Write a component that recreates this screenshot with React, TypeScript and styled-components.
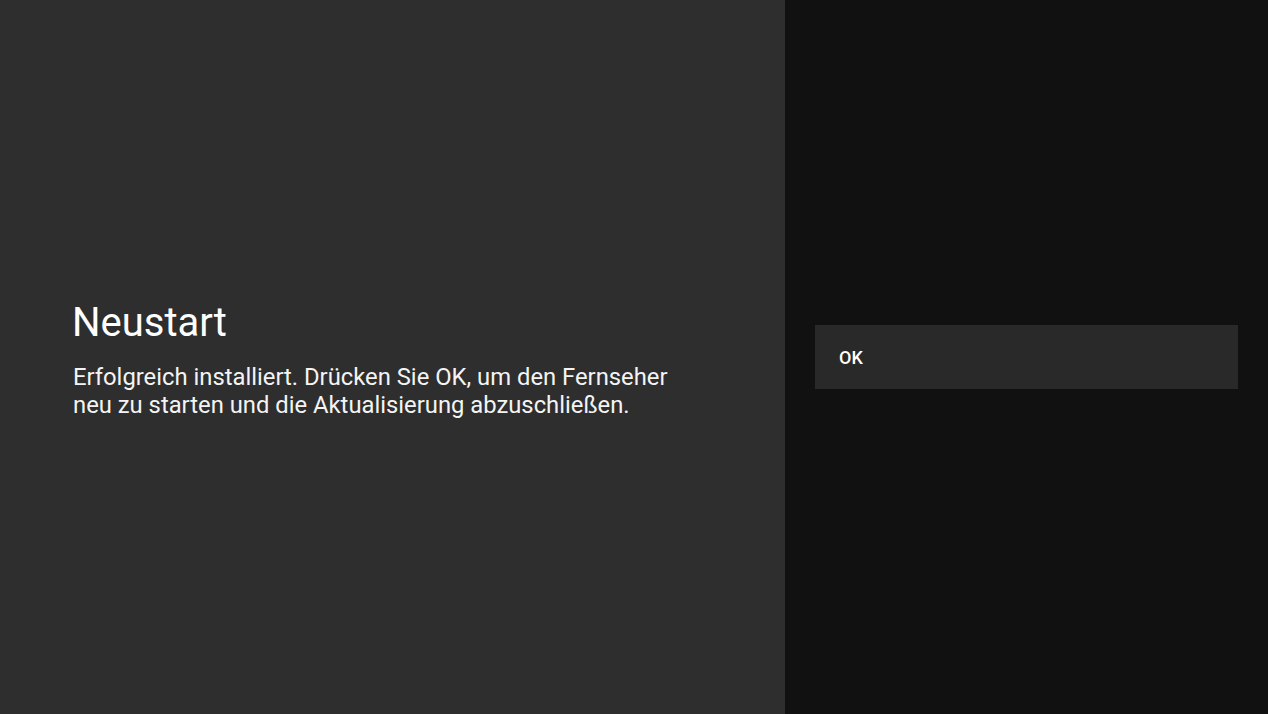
import styled, { createGlobalStyle } from "styled-components"

const GlobalStyle = createGlobalStyle`
  html, body {
    margin: 0;
    padding: 0;
    height: 100%;
    background: #111111;
  }
  #root {
    height: 100%;
  }
`

const actions = ["OK"]

const App = () => {
  return (
    <>
      <GlobalStyle />
      <Screen>
        <Guidance>
          <Title>Neustart</Title>
          <Description>
            Erfolgreich installiert. Drücken Sie OK, um den Fernseher neu zu starten und die Aktualisierung abzuschließen.
          </Description>
        </Guidance>
        <ActionList>
          {actions.map((label) => (
            <ActionButton key={label}>{label}</ActionButton>
          ))}
        </ActionList>
      </Screen>
    </>
  )
}

export default App

const Screen = styled.div`
  display: grid;
  grid-template-columns: 785px 1fr;
  height: 100vh;
  font-family: Roboto, "Noto Sans", sans-serif;
  color: #ffffff;
`

const Guidance = styled.section`
  background: #2d2e2d;
  display: flex;
  flex-direction: column;
  justify-content: center;
  padding: 4px 100px 0 73px;
`

const Title = styled.h1`
  margin: 0 0 16px -1px;
  font-size: 40px;
  font-weight: 400;
  line-height: 48px;
`

const Description = styled.p`
  margin: 0;
  font-size: 23.8px;
  line-height: 28px;
  max-width: 610px;
  color: #f4f4f4;
`

const ActionList = styled.div`
  display: flex;
  flex-direction: column;
  justify-content: center;
  padding: 0 30px;
`

const ActionButton = styled.button`
  display: flex;
  align-items: center;
  height: 64px;
  padding: 0 24px;
  border: 0;
  background: #292929;
  color: #ffffff;
  font-family: Roboto, "Noto Sans", sans-serif;
  font-size: 18px;
  font-weight: 500;
  text-align: left;
  cursor: pointer;
`
